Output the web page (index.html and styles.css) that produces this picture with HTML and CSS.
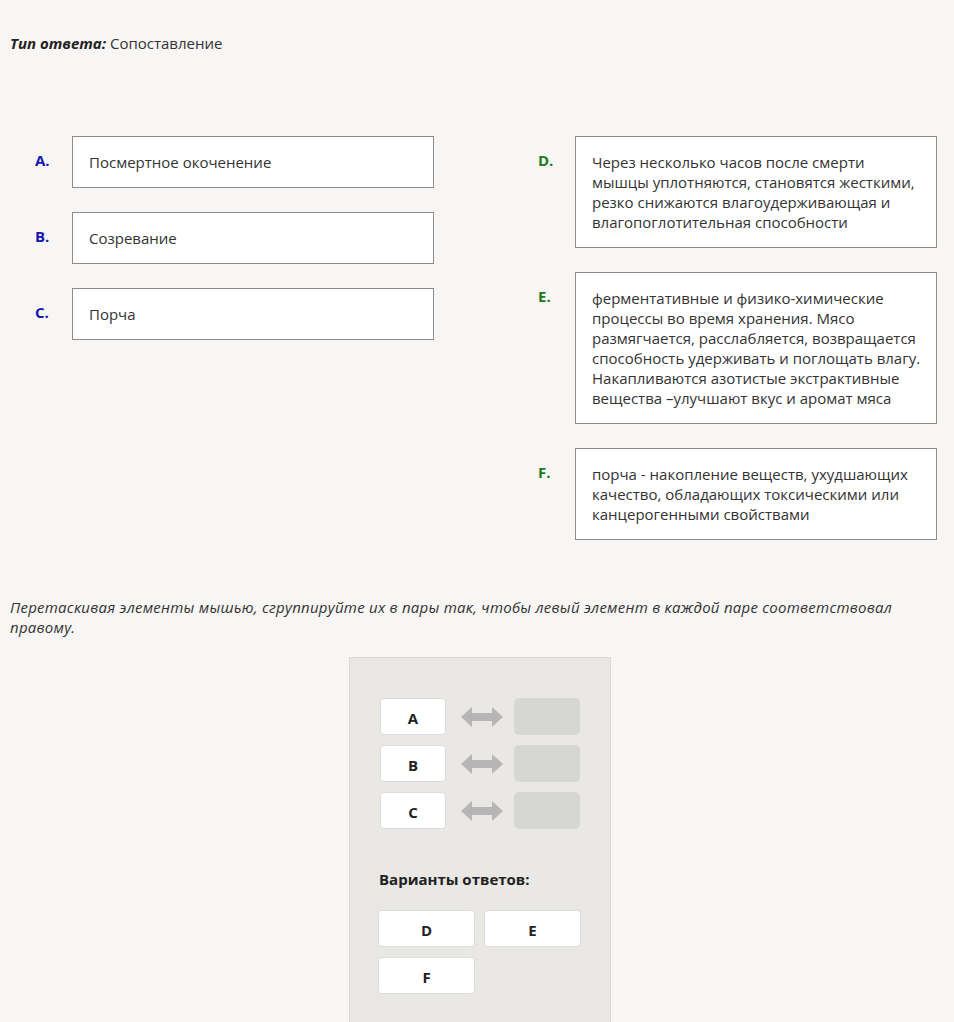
FILE: index.html
```html
<!DOCTYPE html>
<html lang="ru">
<head>
    <meta charset="UTF-8">
    <meta name="viewport" content="width=device-width, initial-scale=1.0">
    <title>Сопоставление</title>
    <link rel="stylesheet" href="styles.css">
</head>
<body>
    <div class="question">
        <p class="answer-type"><b><i>Тип ответа:</i></b> Сопоставление</p>

        <div class="match-area">
            <div class="column">
                <div class="item">
                    <span class="item-label left">A.</span>
                    <div class="item-box">Посмертное окоченение</div>
                </div>
                <div class="item">
                    <span class="item-label left">B.</span>
                    <div class="item-box">Созревание</div>
                </div>
                <div class="item">
                    <span class="item-label left">C.</span>
                    <div class="item-box">Порча</div>
                </div>
            </div>
            <div class="column">
                <div class="item">
                    <span class="item-label right">D.</span>
                    <div class="item-box">Через несколько часов после смерти мышцы уплотняются, становятся жесткими, резко снижаются влагоудерживающая и влагопоглотительная способности</div>
                </div>
                <div class="item">
                    <span class="item-label right">E.</span>
                    <div class="item-box">ферментативные и физико-химические процессы во время хранения. Мясо размягчается, расслабляется, возвращается способность удерживать и поглощать влагу. Накапливаются азотистые экстрактивные вещества –улучшают вкус и аромат мяса</div>
                </div>
                <div class="item">
                    <span class="item-label right">F.</span>
                    <div class="item-box">порча - накопление веществ, ухудшающих качество, обладающих токсическими или канцерогенными свойствами</div>
                </div>
            </div>
        </div>

        <p class="hint">Перетаскивая элементы мышью, сгруппируйте их в пары так, чтобы левый элемент в каждой паре соответствовал правому.</p>

        <div class="dnd-panel">
            <div class="pair">
                <div class="chip">A</div>
                <svg class="arrow" width="42" height="20" viewBox="0 0 42 20"><polygon points="0,10 11,0 11,6 31,6 31,0 42,10 31,20 31,14 11,14 11,20"/></svg>
                <div class="drop"></div>
            </div>
            <div class="pair">
                <div class="chip">B</div>
                <svg class="arrow" width="42" height="20" viewBox="0 0 42 20"><polygon points="0,10 11,0 11,6 31,6 31,0 42,10 31,20 31,14 11,14 11,20"/></svg>
                <div class="drop"></div>
            </div>
            <div class="pair">
                <div class="chip">C</div>
                <svg class="arrow" width="42" height="20" viewBox="0 0 42 20"><polygon points="0,10 11,0 11,6 31,6 31,0 42,10 31,20 31,14 11,14 11,20"/></svg>
                <div class="drop"></div>
            </div>

            <div class="variants-title">Варианты ответов:</div>
            <div class="variants">
                <div class="chip wide">D</div>
                <div class="chip wide">E</div>
                <div class="chip wide">F</div>
            </div>
        </div>
    </div>
</body>
</html>
```

FILE: styles.css
```css
body {
    margin: 0;
    background-color: #f7f6f4;
    color: #333;
    font-family: "Open Sans", "Liberation Sans", sans-serif;
    font-size: 15px;
    line-height: 20px;
}
.question {
    padding: 33px 10px 0 10px;
}
.answer-type {
    margin: 0;
}
.answer-type b {
    color: #222;
}

/* two columns with lettered items */
.match-area {
    display: flex;
    gap: 104px;
    margin-top: 83px;
    padding-left: 25px;
}
.column {
    display: flex;
    flex-direction: column;
    gap: 24px;
    width: 399px;
}
.item {
    display: flex;
    align-items: flex-start;
}
.item-label {
    width: 37px;
    flex: none;
    padding-top: 14px;
    font-weight: bold;
}
.item-label.left {
    color: #1616b0;
}
.item-label.right {
    color: #237a1c;
}
.item-box {
    box-sizing: border-box;
    width: 362px;
    padding: 15px 12px 15px 16px;
    background-color: #fff;
    border: 1px solid #8c8c8c;
}

.hint {
    margin: 57px 0 0 0;
    font-style: italic;
    letter-spacing: 0.25px;
}

/* drag and drop panel */
.dnd-panel {
    width: 262px;
    box-sizing: border-box;
    margin: 20px 0 0 339px;
    padding: 40px 30px 30px 30px;
    background-color: #e9e8e5;
    border: 1px solid #dad9d6;
    border-bottom: none;
    min-height: 380px;
}
.pair {
    display: flex;
    align-items: center;
    margin-bottom: 10px;
}
.chip {
    box-sizing: border-box;
    width: 66px;
    height: 37px;
    padding-top: 3px;
    display: flex;
    align-items: center;
    justify-content: center;
    background-color: #fff;
    border: 1px solid #dcdcdc;
    border-radius: 4px;
    font-weight: bold;
    color: #222;
}
.arrow {
    margin: 0 11px 0 15px;
    fill: #b6b6b6;
}
.drop {
    width: 66px;
    height: 37px;
    background-color: #d6d6d4;
    border-radius: 5px;
}
.variants-title {
    margin: 40px 0 0 -1px;
    font-weight: bold;
    color: #222;
}
.variants {
    display: flex;
    flex-wrap: wrap;
    gap: 10px 9px;
    margin: 21px 0 0 -2px;
    width: 210px;
}
.chip.wide {
    width: 97px;
}
```
